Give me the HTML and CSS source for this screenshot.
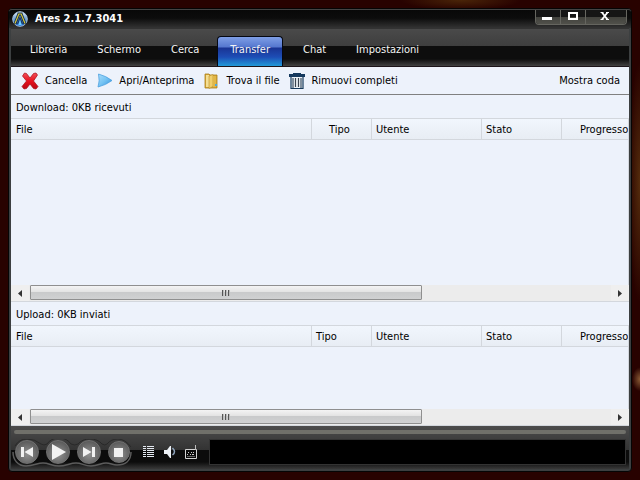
FILE: index.html
```html
<!DOCTYPE html>
<html lang="it">
<head>
<meta charset="utf-8">
<title>Ares 2.1.7.3041</title>
<link rel="stylesheet" href="styles.css">
</head>
<body>
<div class="window">
  <header class="titlebar">
    <svg class="logo" viewBox="0 0 16 16" aria-hidden="true">
      <defs><linearGradient id="ball" x1="0" y1="0" x2="0" y2="1"><stop offset="0" stop-color="#f2f7fc"/><stop offset=".4" stop-color="#7fabd6"/><stop offset="1" stop-color="#1263d2"/></linearGradient></defs>
      <circle cx="8" cy="8" r="7.3" fill="url(#ball)" stroke="#a9c4de" stroke-width="1"/>
      <path d="M3 13 6.800 3h2.400L13 13" fill="none" stroke="#102a4c" stroke-width="3"/>
      <path d="M3 12.500 6.800 3h2.400L13 12.500" fill="none" stroke="#d6c93a" stroke-width="1.200"/>
      <path d="M5.600 13 8 6.500l2.400 6.500" fill="none" stroke="#1a3762" stroke-width="1.200"/>
      <path d="M6.300 14 8 9l1.700 5z" fill="#6fd0ff"/>
    </svg>
    <h1 class="title">Ares 2.1.7.3041</h1>
    <div class="controls">
      <button type="button" class="control" aria-label="Riduci"><svg width="12" height="12" viewBox="0 0 12 12"><path d="M0 7h10v3H0z" fill="#fff"/></svg></button>
      <button type="button" class="control" aria-label="Ingrandisci"><svg width="12" height="12" viewBox="0 0 12 12"><path d="M2 3h8v6H2z" fill="none" stroke="#fff" stroke-width="2"/></svg></button>
      <button type="button" class="control control-close" aria-label="Chiudi"><svg width="12" height="12" viewBox="0 0 12 12"><path d="m2 2.500 5.500 7M7.500 2.500 2 9.500" stroke="#fff" stroke-width="1.800"/><path d="M.5 2.500h3M6 2.500h3M.5 9.500h3M6 9.500h3" stroke="#fff" stroke-width="1"/></svg></button>
    </div>
  </header>
  <div class="client">
    <nav class="menu">
      <a href="#" class="tab">Libreria</a>
      <a href="#" class="tab">Schermo</a>
      <a href="#" class="tab">Cerca</a>
      <a href="#" class="tab tab-active" aria-current="page">Transfer</a>
      <a href="#" class="tab">Chat</a>
      <a href="#" class="tab">Impostazioni</a>
    </nav>
    <div class="toolbar">
      <button type="button" class="tool">
        <svg width="18" height="18" viewBox="0 0 18 18"><defs><linearGradient id="red" x1="0" y1="0" x2="0" y2="1"><stop offset="0" stop-color="#f0505a"/><stop offset=".5" stop-color="#e8121f"/><stop offset="1" stop-color="#b80814"/></linearGradient></defs><path d="M3.500 1 5.500 1.500 9 6l3.500-4.500L15 1l1.500 2-4 6 4.500 5.500-2 2.500-2.500-.5L9 12l-3.500 4.500L3 17l-2-2.500L5.500 9l-4-5z" fill="url(#red)" stroke="#a80d18" stroke-width=".7"/></svg>
        <span>Cancella</span></button>
      <button type="button" class="tool tool-next">
        <svg width="16" height="16" viewBox="0 0 16 16"><defs><linearGradient id="sky" x1="0" y1="0" x2="1" y2="1"><stop offset="0" stop-color="#a9dcfa"/><stop offset=".5" stop-color="#74c3f3"/><stop offset="1" stop-color="#2f8cd8"/></linearGradient></defs><path d="M1.500 1Q9 3 15 7.500q-6 4.500-14 6.500 2-6 .5-13z" fill="url(#sky)" stroke="#4a9fe0" stroke-width=".8"/></svg>
        <span>Apri/Anteprima</span></button>
      <button type="button" class="tool tool-next">
        <svg width="16" height="16" viewBox="0 0 16 16"><path d="M1 1h4l1 1h7v13H1z" fill="#d9ab3a" stroke="#a97e1d" stroke-width=".8"/><path d="M2 2h3v12H2z" fill="#f5df93"/><path d="m5 3 4-1.500v12L5 15.500z" fill="#f0cf6c" stroke="#b98d2b" stroke-width=".6"/><path d="M9 3h3v11H9z" fill="#e1b748"/><path d="M11 11h2v2h-2z" fill="#4ca9e0"/></svg>
        <span>Trova il file</span></button>
      <button type="button" class="tool tool-next">
        <svg width="16" height="16" viewBox="0 0 16 16"><path d="M2 3h12v12.500H2z" fill="#edf2f7" stroke="#173a5b" stroke-width="1.200"/><path d="M4 5v10M12 5v10" stroke="#82909e" stroke-width="2"/><path d="M6.500 5v9M9.500 5v9" stroke="#3a434e" stroke-width="1.200"/><path d="M0 1h4V0h8v1h4v3H0z" fill="#15395e"/></svg>
        <span>Rimuovi completi</span></button>
      <button type="button" class="tool tool-queue">Mostra coda</button>
    </div>

    <section class="pane pane-download">
      <h2 class="caption">Download: 0KB ricevuti</h2>
      <div class="list">
        <table class="files">
          <colgroup><col class="c-file"><col class="c-type"><col class="c-user"><col class="c-state"><col></colgroup>
          <thead><tr><th scope="col">File</th><th scope="col" class="centered">Tipo</th><th scope="col">Utente</th><th scope="col">Stato</th><th scope="col" class="progress">Progresso</th></tr></thead>
        </table>
      </div>
      <div class="scroll">
        <button type="button" class="arrow" aria-label="Scorri a sinistra"><svg width="4" height="7" viewBox="0 0 4 7"><path d="M4 0v7L0 3.500z" fill="#333"/></svg></button>
        <div class="rail"><div class="thumb"><span class="grip"></span></div></div>
        <button type="button" class="arrow" aria-label="Scorri a destra"><svg width="4" height="7" viewBox="0 0 4 7"><path d="M0 0v7l4-3.500z" fill="#333"/></svg></button>
      </div>
    </section>

    <section class="pane">
      <h2 class="caption">Upload: 0KB inviati</h2>
      <div class="list list-upload">
        <table class="files">
          <colgroup><col class="c-file"><col class="c-type"><col class="c-user"><col class="c-state"><col></colgroup>
          <thead><tr><th scope="col">File</th><th scope="col">Tipo</th><th scope="col">Utente</th><th scope="col">Stato</th><th scope="col" class="progress">Progresso</th></tr></thead>
        </table>
      </div>
      <div class="scroll">
        <button type="button" class="arrow" aria-label="Scorri a sinistra"><svg width="4" height="7" viewBox="0 0 4 7"><path d="M4 0v7L0 3.500z" fill="#333"/></svg></button>
        <div class="rail"><div class="thumb"><span class="grip"></span></div></div>
        <button type="button" class="arrow" aria-label="Scorri a destra"><svg width="4" height="7" viewBox="0 0 4 7"><path d="M0 0v7l4-3.500z" fill="#333"/></svg></button>
      </div>
    </section>

    <footer class="player">
      <input type="range" class="seek" aria-label="Posizione" value="0">
      <div class="deck">
        <div class="transport">
          <svg class="cradle" width="120" height="30" viewBox="0 0 120 30" aria-hidden="true"><path d="M1 13C1 21 6 27 14 27c8 0 11-3 17-3s9 3 16 3 11-3 17-3 8 3 15 3 10-3 15-3 6 2 11 2c8 0 14-4 14-13" fill="none" stroke="#5c5c5c" stroke-width="1.500"/><path d="M3 7Q7 0 15 0t14 5q3 2 6 0 4-6 12-6t12 6q4 2 7 0 4-5 12-5t12 5q3 2 5 0 4-5 11-5t13 8" fill="none" stroke="#292929"/></svg>
          <button type="button" class="round" aria-label="Precedente"><svg width="14" height="12" viewBox="0 0 14 12"><path d="M1 1h3v10H1zM13 1v10L4.500 6z" fill="#f2f2f2"/></svg></button>
          <button type="button" class="round" aria-label="Riproduci"><svg width="16" height="16" viewBox="0 0 16 16"><path d="M2 0v16L16 8z" fill="#f2f2f2"/></svg></button>
          <button type="button" class="round" aria-label="Successivo"><svg width="14" height="12" viewBox="0 0 14 12"><path d="M1 1v10l8.500-5zM10 1h3v10h-3z" fill="#f2f2f2"/></svg></button>
          <button type="button" class="round round-stop" aria-label="Ferma"><svg width="10" height="10" viewBox="0 0 10 10"><path d="M0 1h9v9H0z" fill="#f2f2f2"/></svg></button>
        </div>
        <div class="extras">
          <button type="button" class="extra" aria-label="Playlist"><svg width="12" height="12" viewBox="0 0 12 12"><path d="M0 .5h3M0 2.500h3M0 4.500h3M0 6.500h3M0 8.500h3M0 10.500h3M4 .5h7M4 2.500h7M4 4.500h7M4 6.500h7M4 8.500h7M4 10.500h7" stroke="#e4e9f1"/></svg></button>
          <button type="button" class="extra" aria-label="Volume"><svg width="12" height="14" viewBox="0 0 12 14"><path d="M0 5h3l3-4h1v12H6L3 9H0z" fill="#eef2f7"/><path d="M8.500 3q4 4 0 7" fill="none" stroke="#8ca0b8" stroke-width="1.500"/></svg></button>
          <button type="button" class="extra" aria-label="Radio"><svg width="12" height="14" viewBox="0 0 12 14"><path d="M.5 4.500h11v9H.5z" fill="none" stroke="#d4d4d4"/><path d="M10.500 0v5" stroke="#bbb"/><path d="M3 7.500h1M6 7.500h1M8 7.500h1M2 9.500h1M5 9.500h1M7 9.500h2" stroke="#ccc"/><path d="M2 11.500h8" stroke="#666"/></svg></button>
        </div>
        <div class="display"></div>
      </div>
    </footer>
  </div>
</div>
</body>
</html>
```
FILE: styles.css
```css
* { box-sizing: border-box; }

body {
  margin: 0;
  height: 100vh;
  padding: 8px;
  display: flex;
  overflow: hidden;
  font: 11px/14px "DejaVu Sans Condensed", "Noto Sans", sans-serif;
  color: #000;
  background:
    radial-gradient(ellipse 60px 10px at 72% 0, #4a2508, transparent),
    radial-gradient(ellipse 12px 120px at 100% 38%, #552c0c, transparent),
    radial-gradient(ellipse 8px 12px at 100% 79%, #8a5a34, transparent),
    #280200;
}

button {
  appearance: none;
  margin: 0;
  padding: 0;
  border: 0;
  background: none;
  font: inherit;
  color: inherit;
}

svg { display: block; flex: none; }

.window {
  flex: 1;
  min-width: 0;
  display: flex;
  flex-direction: column;
  border: 1px solid #050505;
  border-radius: 4px;
  background: #3c3f40;
  padding: 0 2px 2px;
}

.titlebar {
  display: flex;
  align-items: center;
  gap: 7px;
  height: 19px;
  margin: 0 -2px;
  padding: 0 4px 0 3px;
  border-top: 1px solid #444;
  border-radius: 3px 3px 0 0;
  background: linear-gradient(#080808 0, #0c0c0c 45%, #333 100%);
}

.logo { width: 16px; height: 16px; }

.title {
  margin: 0;
  flex: 1;
  font-size: 11px;
  line-height: 14px;
  font-weight: bold;
  color: #fff;
}

.controls {
  display: flex;
  align-self: flex-start;
  border: 1px solid #65655f;
  border-top: 0;
  border-radius: 0 0 4px 4px;
  overflow: hidden;
}

.control {
  display: flex;
  align-items: flex-start;
  justify-content: center;
  width: 25px;
  height: 14px;
  border-right: 1px solid #65655f;
  background: linear-gradient(#151515 50%, #42423d 50%, #50504a);
}

.control-close { width: 40px; border-right: 0; }

.client {
  flex: 1;
  min-height: 0;
  display: flex;
  flex-direction: column;
  background: #edf2fb;
}

.menu {
  display: flex;
  height: 39px;
  padding: 7px 0 0 4px;
  border-top: 1px solid #333;
  border-bottom: 1px solid #1c1419;
  background: linear-gradient(#4a4a4a 0, #3e3e3e 17px, #0d0d0d 17px, #0d0d0d 30px, #424242 37px);
}

.tab {
  padding: 6px 14px 0;
  border: 1px solid transparent;
  border-bottom: 0;
  color: #f4f4f4;
  text-decoration: none;
}

.tab-active {
  padding: 6px 12px 0;
  margin: 0 5px 0 3px;
  border-color: #050812;
  border-radius: 4px 4px 0 0;
  background: linear-gradient(#7f9fe6 0, #5577cf 10px, #1a3494 11px, #1d4db5 20px, #22a2dc 30px);
}

.toolbar {
  display: flex;
  align-items: center;
  height: 28px;
  padding: 0 9px 0 10px;
  border-bottom: 1px solid #808080;
}

.tool { display: flex; align-items: center; gap: 6px; }
.tool-next { margin-left: 10px; }
.tool-queue { margin-left: auto; }

.pane { display: flex; flex-direction: column; }
.pane-download { flex: 1; min-height: 0; }

.caption {
  margin: 0;
  height: 23px;
  padding: 6px 5px 0;
  font-size: 11px;
  line-height: 14px;
  font-weight: normal;
}

.list {
  flex: 1;
  min-height: 0;
  overflow: hidden;
  border-top: 1px solid #d3d7dd;
  border-right: 1px solid #d3d7dd;
}

.list-upload { flex: none; height: 84px; }

.files {
  width: 100%;
  table-layout: fixed;
  border-collapse: separate;
  border-spacing: 0;
}

.c-file { width: 301px; }
.c-type { width: 60px; }
.c-user { width: 110px; }
.c-state { width: 80px; }

.files th {
  height: 21px;
  padding: 4px 4px 2px;
  border-right: 1px solid #d3d7dd;
  border-bottom: 1px solid #d3d7dd;
  background: linear-gradient(#f1f6fd, #e8edf4);
  font-weight: normal;
  text-align: left;
  white-space: nowrap;
}

.files th:first-child { padding-left: 5px; }

.files .centered { padding-right: 8px; text-align: center; }

.files .progress {
  padding-left: 18px;
  padding-right: 0;
  border-right: 0;
  overflow: hidden;
}

.scroll {
  display: flex;
  height: 17px;
  border-bottom: 1px solid #d3d7dd;
  background: #ececec;
}

.arrow {
  display: flex;
  align-items: center;
  justify-content: center;
  width: 18px;
  background: #efefef;
}

.rail { flex: 1; padding-left: 1px; }

.thumb {
  display: flex;
  align-items: center;
  justify-content: center;
  max-width: 100%;
  width: 392px;
  height: 15px;
  border: 1px solid #8f8f8f;
  border-radius: 1px;
  background: linear-gradient(#f4f4f4, #e2e2e2 48%, #c9cacb 50%, #d0d1d2);
}

.grip {
  width: 8px;
  height: 6px;
  background: repeating-linear-gradient(90deg, #555 0, #555 1px, #bbb 1px, #bbb 2px, transparent 2px, transparent 3px);
}

.player {
  display: flex;
  flex-direction: column;
  gap: 5px;
  height: 43px;
  padding: 4px 3px 0;
  background: linear-gradient(#4c4c4c 0, #333 24px, #0c0c0c 24px, #0c0c0c 36px, #383838 43px);
}

.seek {
  appearance: none;
  width: 100%;
  height: 4px;
  margin: 0;
  border-radius: 2px;
  background: #70706a;
}

.seek::-webkit-slider-thumb { appearance: none; width: 1px; height: 4px; }

.deck { display: flex; align-items: flex-start; }

.transport {
  position: relative;
  display: flex;
  align-items: center;
  gap: 7px;
  padding: 1px 0 0 1px;
}

.cradle { position: absolute; left: -2px; top: 0; }

.round {
  position: relative;
  display: flex;
  align-items: center;
  justify-content: center;
  width: 24px;
  height: 24px;
  border: 1px solid #707070;
  border-radius: 50%;
  background: radial-gradient(circle at 50% 60%, #929292, #5b5b5b 75%);
}

.round-stop { width: 22px; height: 22px; }

.extras {
  display: flex;
  align-items: center;
  gap: 9px;
  height: 25px;
  margin-left: 13px;
}

.display {
  flex: 1;
  height: 26px;
  margin-left: 12px;
  border: 1px solid #333;
  background: #000;
}
```
